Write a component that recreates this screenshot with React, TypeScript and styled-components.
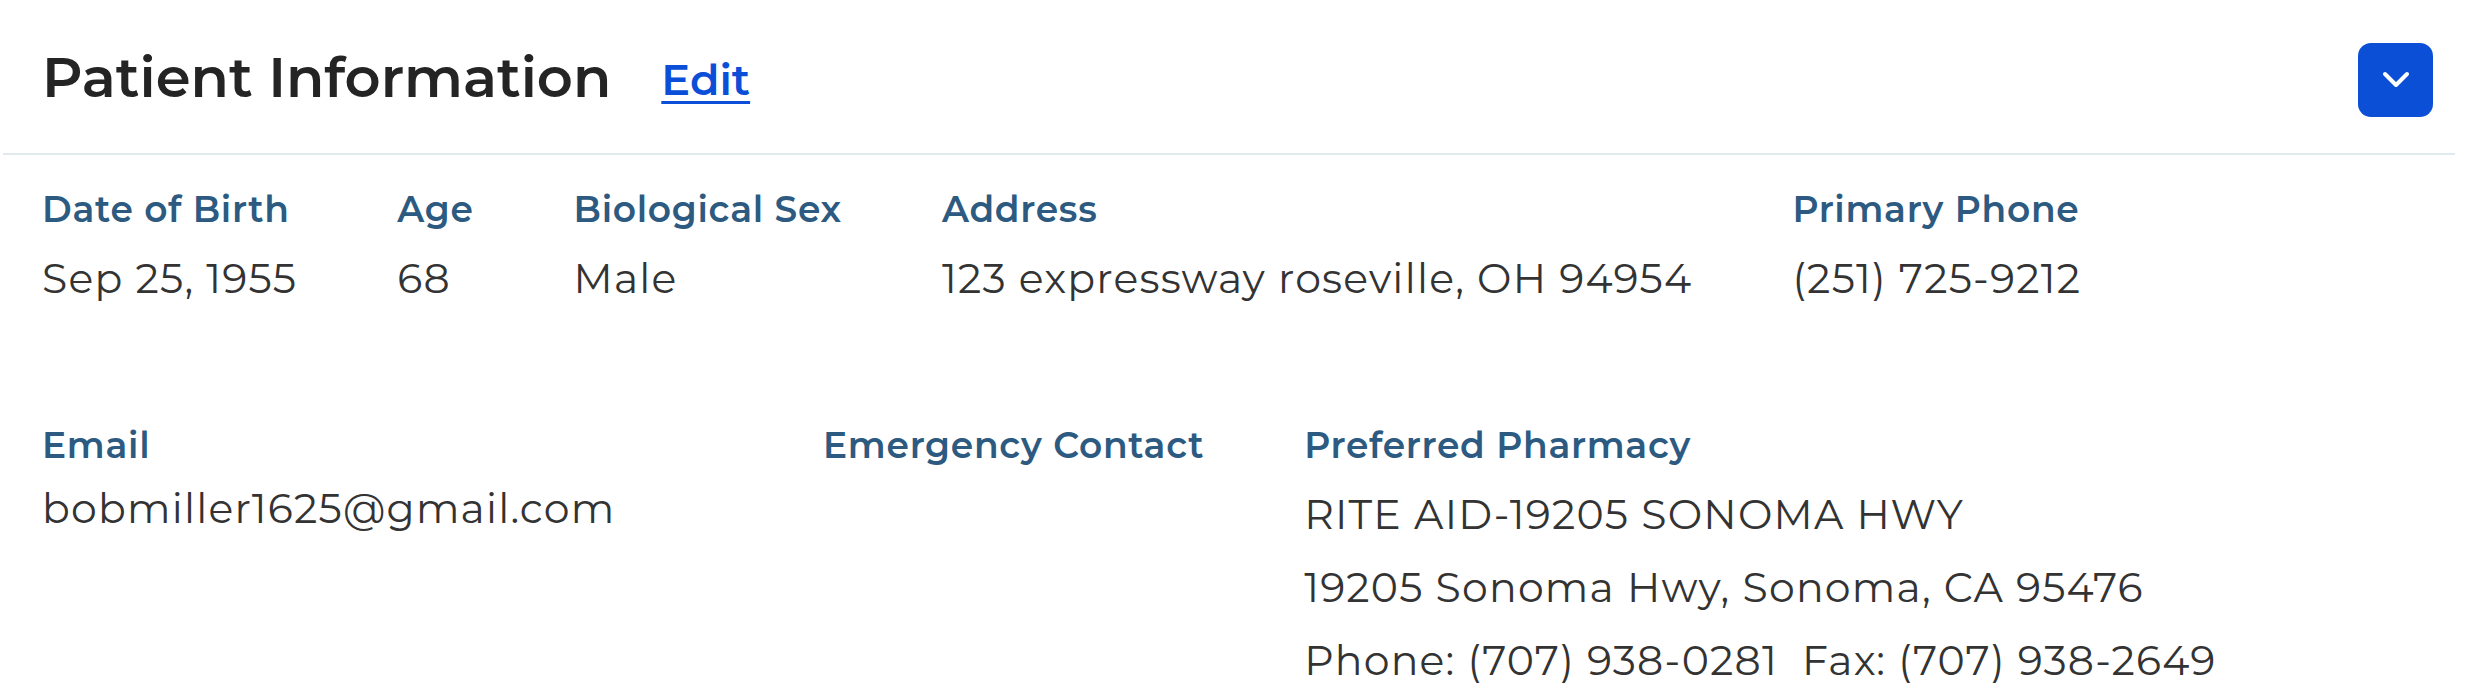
import React from "react";
import styled, { createGlobalStyle } from "styled-components";

const Global = createGlobalStyle`
  html, body { margin: 0; padding: 0; background: #ffffff; }
  body { font-family: Montserrat, "Open Sans", "Noto Sans", Arial, sans-serif; }
  * { box-sizing: border-box; }
`;

const Card = styled.section`
  width: 2452px;
  margin-left: 3px;
  background: #ffffff;
`;

const Header = styled.header`
  display: flex;
  align-items: center;
  height: 155px;
  padding: 0 22px 0 39px;
  border-bottom: 2px solid #e1eaef;
`;

const Title = styled.h1`
  margin: 0;
  font-size: 56px;
  font-weight: 600;
  color: #242424;
  letter-spacing: 0;
`;

const EditLink = styled.a`
  margin-left: 50px;
  margin-top: 6px;
  font-size: 43px;
  font-weight: 600;
  color: #0b4fd8;
  text-decoration: underline;
  text-decoration-thickness: 3px;
  text-underline-offset: 6px;
  cursor: pointer;
`;

const ToggleButton = styled.button`
  margin-left: auto;
  margin-top: 6px;
  width: 75px;
  height: 74px;
  border: none;
  border-radius: 13px;
  background: #0a4fd6;
  display: flex;
  align-items: center;
  justify-content: center;
  padding: 0;
  cursor: pointer;
`;

const Body = styled.div`
  padding: 34px 42px 0 39px;
  display: flex;
  flex-direction: column;
  gap: 123px;
`;

const Row = styled.div`
  display: flex;
  gap: 100px;
  align-items: flex-start;
`;

const Field = styled.div<{ $width?: number }>`
  display: flex;
  flex-direction: column;
  flex: ${(p) => (p.$width ? `0 0 ${p.$width}px` : "0 0 auto")};
`;

const Label = styled.div`
  font-size: 36px;
  line-height: 40px;
  font-weight: 600;
  color: #2d5a80;
  letter-spacing: 0.02em;
  white-space: nowrap;
`;

const Value = styled.div<{ $lh?: number; $gap?: number }>`
  margin-top: ${(p) => p.$gap ?? 25}px;
  font-size: 41px;
  line-height: ${(p) => p.$lh ?? 48}px;
  font-weight: 400;
  color: #333333;
  letter-spacing: 0.03em;
  white-space: pre;
`;

const Lines = styled.div`
  margin-top: 13px;
  display: flex;
  flex-direction: column;
`;

const Line = styled.div`
  font-size: 41px;
  line-height: 73px;
  font-weight: 400;
  color: #333333;
  letter-spacing: 0.03em;
  white-space: pre;
`;

const Chevron = () => (
  <svg width="28" height="18" viewBox="0 0 28 18" fill="none">
    <path d="M3 3l11 11L25 3" stroke="#ffffff" strokeWidth="4" strokeLinecap="round" strokeLinejoin="round" />
  </svg>
);

export default function App() {
  return (
    <>
      <Global />
      <Card>
        <Header>
          <Title>Patient Information</Title>
          <EditLink>Edit</EditLink>
          <ToggleButton aria-label="Collapse">
            <Chevron />
          </ToggleButton>
        </Header>
        <Body>
          <Row>
            <Field>
              <Label>Date of Birth</Label>
              <Value>Sep 25, 1955</Value>
            </Field>
            <Field>
              <Label>Age</Label>
              <Value>68</Value>
            </Field>
            <Field>
              <Label>Biological Sex</Label>
              <Value>Male</Value>
            </Field>
            <Field>
              <Label>Address</Label>
              <Value>123 expressway roseville, OH 94954</Value>
            </Field>
            <Field>
              <Label>Primary Phone</Label>
              <Value>(251) 725-9212</Value>
            </Field>
          </Row>
          <Row>
            <Field $width={681}>
              <Label>Email</Label>
              <Value $gap={13} $lh={60}>bobmiller1625@gmail.com</Value>
            </Field>
            <Field>
              <Label>Emergency Contact</Label>
            </Field>
            <Field>
              <Label>Preferred Pharmacy</Label>
              <Lines>
                <Line>RITE AID-19205 SONOMA HWY</Line>
                <Line>19205 Sonoma Hwy, Sonoma, CA 95476</Line>
                <Line>Phone: (707) 938-0281  Fax: (707) 938-2649</Line>
              </Lines>
            </Field>
          </Row>
        </Body>
      </Card>
    </>
  );
}
